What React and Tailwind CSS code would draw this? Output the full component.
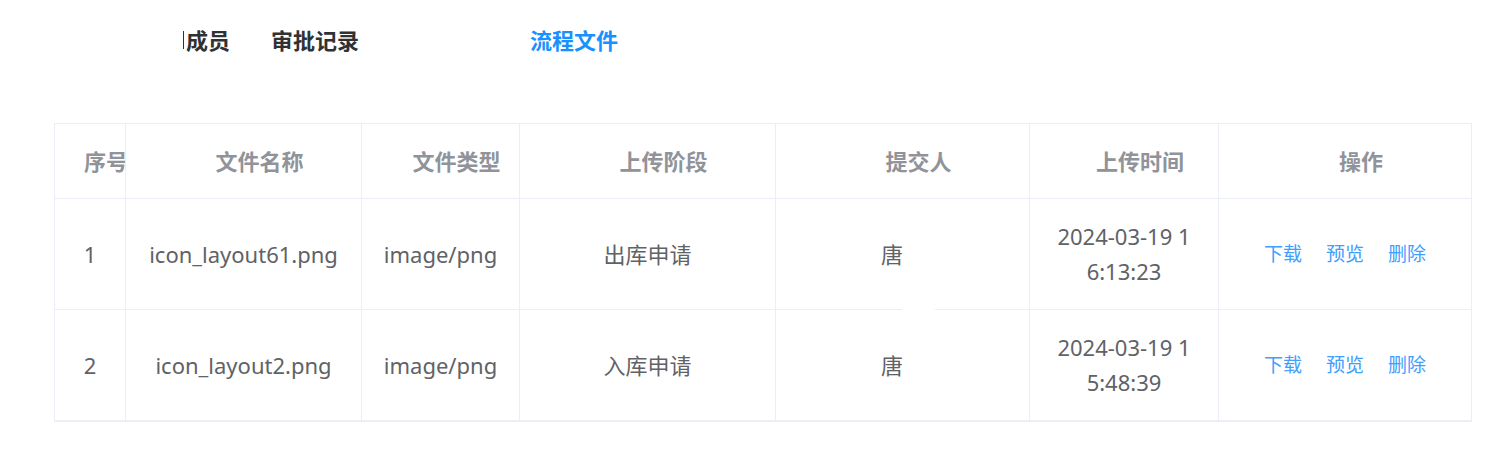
import React from "react";

const files = [
  { id: 1, name: "icon_layout61.png", type: "image/png", stage: "出库申请", user: "唐", time: "2024-03-19 16:13:23" },
  { id: 2, name: "icon_layout2.png", type: "image/png", stage: "入库申请", user: "唐", time: "2024-03-19 15:48:39" },
];

const headers = ["序号", "文件名称", "文件类型", "上传阶段", "提交人", "上传时间", "操作"];

const font = { fontFamily: '"Noto Sans", "Noto Sans CJK SC", sans-serif' };

export default function App() {
  return (
    <div className="w-[1505px] h-[451px] bg-white overflow-hidden" style={font}>
      <div className="flex items-center h-[28px] mt-[26px] text-[22px] leading-[28px] font-bold">
        <span className="ml-[183px] h-[18px] border-l border-[#303133]"></span>
        <span className="ml-[2px] text-[#303133]">成员</span>
        <span className="ml-[41px] text-[#303133]">审批记录</span>
        <span className="ml-[171px] text-[#1890ff]">流程文件</span>
      </div>

      <div className="ml-[54px] mt-[69px] w-[1418px] border-l border-t border-b border-[#ebeef5]">
        <div className="grid grid-cols-[71px_236px_158px_256px_254px_189px_253px]">
          {headers.map((h) => (
            <div
              key={h}
              className="h-[75px] border-r border-b border-[#ebeef5] flex items-center justify-center pl-[32px] overflow-hidden whitespace-nowrap text-[22px] font-bold text-[#909399]"
            >
              {h}
            </div>
          ))}
          {files.map((f, i) => (
            <React.Fragment key={f.id}>
              <div className="h-[111px] border-r border-b border-[#ebeef5] flex items-center justify-center text-[22px] text-[#606266]">{f.id}</div>
              <div className="h-[111px] border-r border-b border-[#ebeef5] flex items-center justify-center text-[22px] text-[#606266]">{f.name}</div>
              <div className="h-[111px] border-r border-b border-[#ebeef5] flex items-center justify-center text-[22px] text-[#606266]">{f.type}</div>
              <div className="h-[111px] border-r border-b border-[#ebeef5] flex items-center justify-center text-[22px] text-[#606266]">{f.stage}</div>
              <div className="relative h-[111px] border-r border-b border-[#ebeef5] flex items-center justify-center text-[22px] text-[#606266]">
                <span className="pr-[21px]">{f.user}</span>
                {i === 0 && <div className="absolute left-[126px] bottom-[-2px] w-[33px] h-[4px] bg-white"></div>}
              </div>
              <div className="h-[111px] border-r border-b border-[#ebeef5] flex items-center justify-center text-[22px] leading-[35px] text-[#606266]">
                <div className="w-[140px] text-center break-all">{f.time}</div>
              </div>
              <div className="h-[111px] border-r border-b border-[#ebeef5] flex items-center justify-center gap-[24px] text-[19px] text-[#409eff]">
                <span>下载</span>
                <span>预览</span>
                <span>删除</span>
              </div>
            </React.Fragment>
          ))}
        </div>
      </div>
    </div>
  );
}
